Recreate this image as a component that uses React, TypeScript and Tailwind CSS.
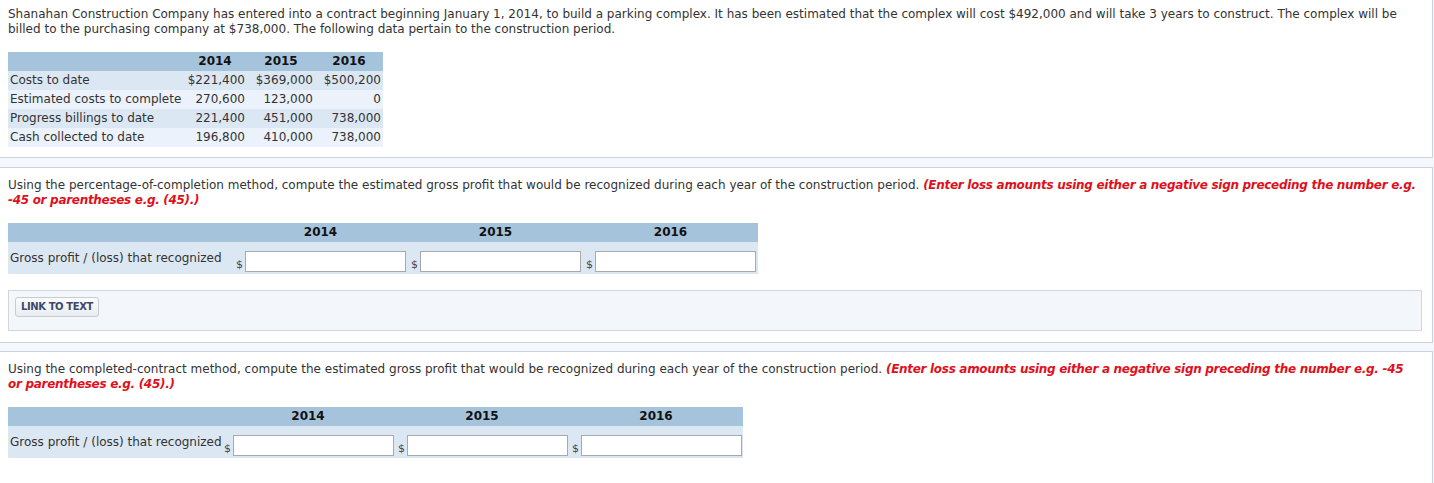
import React from 'react';

const years = ['2014', '2015', '2016'];

const dataRows = [
  { label: 'Costs to date', values: ['$221,400', '$369,000', '$500,200'], bg: 'bg-[#dce7f4]' },
  { label: 'Estimated costs to complete', values: ['270,600', '123,000', '0'], bg: 'bg-[#ebf2fb]' },
  { label: 'Progress billings to date', values: ['221,400', '451,000', '738,000'], bg: 'bg-[#dce7f4]' },
  { label: 'Cash collected to date', values: ['196,800', '410,000', '738,000'], bg: 'bg-[#ebf2fb]' },
];

const Hint = ({ children }: { children: React.ReactNode }) => (
  <span className="font-bold italic tracking-[-0.3px] text-[#e0101b]">{children}</span>
);

const AnswerTable = ({ labelWidth, colWidth }: { labelWidth: string; colWidth: string }) => (
  <div className="mt-[15px] ml-[8px] inline-block">
    <div className="flex h-[19px] bg-[#a6c3dc] font-bold text-[#111]">
      <div className={labelWidth} />
      {years.map((y) => (
        <div key={y} className={`${colWidth} flex items-center justify-center`}>
          {y}
        </div>
      ))}
    </div>
    <div className="flex h-[32px] bg-[#dce7f4]">
      <div className={`${labelWidth} flex items-center whitespace-nowrap pl-[2px]`}>
        Gross profit / (loss) that recognized
      </div>
      {years.map((y) => (
        <div key={y} className={`${colWidth} flex items-end pb-[2px] pl-[3px]`}>
          <span className="w-[9px] text-[11px] leading-[14px] text-[#444]">$</span>
          <input
            type="text"
            className="h-[21px] w-[161px] border border-[#a9a9a9] bg-white outline-none"
          />
        </div>
      ))}
    </div>
  </div>
);

export default function App() {
  return (
    <div
      className="min-h-screen bg-[#f4f7fb] text-[12px] leading-[15px] text-[#333]"
      style={{ fontFamily: '"DejaVu Sans", Verdana, sans-serif' }}
    >
      {/* data section */}
      <div className="mr-[1px] border-r border-b border-[#c9d3dd] bg-white px-[8px] pt-[7px] pb-[10px]">
        <p>
          Shanahan Construction Company has entered into a contract beginning January 1, 2014, to build a parking complex. It has been estimated that the complex will cost $492,000 and will take 3 years to construct. The complex will be billed to the purchasing company at $738,000. The following data pertain to the construction period.
        </p>
        <table className="mt-[15px] border-collapse">
          <thead>
            <tr className="h-[19px] bg-[#a6c3dc] font-bold text-[#111]">
              <th className="w-[175px]" />
              <th className="w-[64px] text-center font-bold">2014</th>
              <th className="w-[68px] text-center font-bold">2015</th>
              <th className="w-[68px] text-center font-bold">2016</th>
            </tr>
          </thead>
          <tbody>
            {dataRows.map((r) => (
              <tr key={r.label} className={`h-[19px] ${r.bg}`}>
                <td className="pl-[2px] text-left whitespace-nowrap">{r.label}</td>
                {r.values.map((v, i) => (
                  <td key={i} className="pr-[2px] text-right">
                    {v}
                  </td>
                ))}
              </tr>
            ))}
          </tbody>
        </table>
      </div>

      {/* percentage-of-completion */}
      <div className="mt-[9px] mr-[1px] border-t border-r border-b border-[#c9d3dd] bg-white pt-[10px] pb-[11px]">
        <p className="px-[8px]">
          <span className="whitespace-nowrap">
            Using the percentage-of-completion method, compute the estimated gross profit that would be recognized during each year of the construction period.{' '}
            <Hint>(Enter loss amounts using either a negative sign preceding the number e.g.</Hint>
          </span>
          <br />
          <Hint>-45 or parentheses e.g. (45).)</Hint>
        </p>
        <AnswerTable labelWidth="w-[225px]" colWidth="w-[175px]" />
        <div className="mt-[16px] mr-[10px] ml-[8px] flex h-[41px] items-start border border-[#cfd6de] bg-[#f3f6fb] pt-[6px] pl-[6px]">
          <button className="h-[20px] rounded-[3px] border border-[#c8ccd2] bg-gradient-to-b from-[#fbfcfd] to-[#e9edf2] px-[5px] text-[10px] font-bold leading-[18px] tracking-[-0.4px] text-[#3a4a68]">
            LINK TO TEXT
          </button>
        </div>
      </div>

      {/* completed-contract */}
      <div className="mt-[8px] mr-[1px] border-t border-r border-[#c9d3dd] bg-white pt-[10px] pb-[26px]">
        <p className="px-[8px]">
          <span className="whitespace-nowrap">
            Using the completed-contract method, compute the estimated gross profit that would be recognized during each year of the construction period.{' '}
            <Hint>(Enter loss amounts using either a negative sign preceding the number e.g. -45</Hint>
          </span>
          <br />
          <Hint>or parentheses e.g. (45).)</Hint>
        </p>
        <AnswerTable labelWidth="w-[213px]" colWidth="w-[174px]" />
      </div>
    </div>
  );
}
